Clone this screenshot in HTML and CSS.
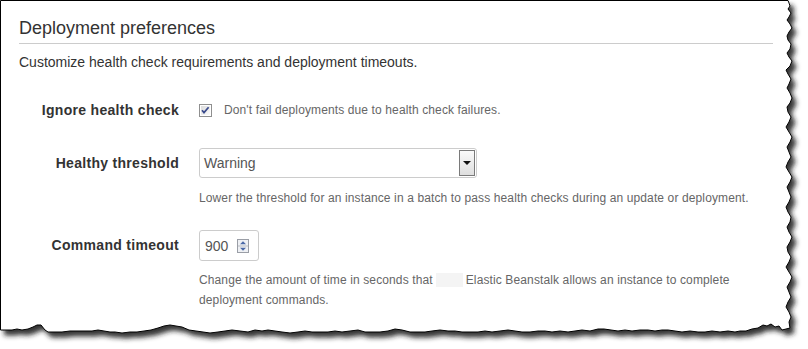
FILE: index.html
```html
<!DOCTYPE html>
<html lang="en">
<head>
  <meta charset="UTF-8">
  <title>Deployment preferences</title>
  <link rel="stylesheet" href="styles.css">
</head>
<body>
  <div class="page">
    <!-- torn paper frame behind the panel -->
    <svg class="torn" width="808" height="349" viewBox="0 0 808 349">
      <defs>
        <filter id="shadow" x="-5%" y="-5%" width="115%" height="120%">
          <feDropShadow dx="4" dy="5" stdDeviation="2.5" flood-color="#1a1a1a" flood-opacity="0.9"/>
        </filter>
      </defs>
      <path filter="url(#shadow)" fill="#fff" stroke="#000" stroke-width="1"
        d="M0.5 0.5 L788 0.5 L789 3 L790 6 L788 9 L791 13 L789 17 L787 20 L790 24 L792 28 L789 32 L787 36 L788 40 L791 44 L790 49 L787 53 L789 57 L792 61 L790 66 L786 70 L788 74 L791 79 L789 84 L787 88 L790 93 L792 98 L790 103 L787 107 L788 112 L791 117 L789 122 L786 127 L789 132 L792 137 L790 142 L787 147 L789 152 L791 157 L788 162 L786 167 L789 172 L792 177 L790 182 L787 187 L789 192 L791 197 L789 202 L786 207 L788 212 L791 217 L790 222 L787 227 L789 232 L792 237 L790 242 L787 247 L788 252 L791 257 L789 262 L786 267 L789 272 L792 277 L790 282 L787 287 L789 292 L791 297 L788 302 L786 307 L789 312 L791 317 L789 322 L790 328
        L786 329 L782 330 L779 326 L775 327 L771 324 L767 326 L763 325 L758 328 L752 329 L746 331 L740 331 L735 332 L728 331 L720 332 L712 331 L705 332 L698 332 L690 331 L682 332 L675 331 L668 330 L662 330 L655 331 L648 330 L640 330 L632 331 L625 330 L618 331 L611 330 L604 329 L598 329 L590 331 L582 330 L575 331 L568 332 L560 331 L552 332 L545 331 L538 331 L530 332 L522 332 L515 331 L508 330 L500 331 L492 332 L485 331 L478 332 L470 332 L462 332 L455 331 L448 331 L440 330 L432 331 L425 332 L418 332 L410 332 L402 330 L395 329 L388 331 L380 332 L372 332 L365 332 L358 330 L350 331 L342 332 L335 331 L328 332 L320 332 L312 332 L305 331 L298 332 L290 333 L282 332 L275 331 L268 330 L262 331 L255 330 L248 332 L240 331 L232 330 L225 331 L218 332 L210 333 L203 332 L196 331 L189 330 L182 327 L176 326 L170 325 L164 326 L158 328 L151 330 L144 331 L137 332 L130 332 L122 333 L115 332 L110 332 L104 331 L98 330 L92 331 L85 331 L78 331 L70 331 L62 332 L55 332 L48 332 L45 330 L41 325 L37 325 L33 327 L28 329 L22 330 L17 329 L12 330 L6 330 L0.5 330 Z"/>
    </svg>

    <div class="panel">
      <h2 class="panel-title">Deployment preferences</h2>
      <p class="panel-desc">Customize health check requirements and deployment timeouts.</p>

      <div class="field field-check">
        <label class="field-label">Ignore health check</label>
        <div class="field-body check-line">
          <span class="checkbox">
            <svg width="13" height="13" viewBox="0 0 13 13">
              <defs>
                <linearGradient id="cbg" x1="0" y1="0" x2="1" y2="1">
                  <stop offset="0" stop-color="#dcdcdc"/>
                  <stop offset="1" stop-color="#fbfbfb"/>
                </linearGradient>
              </defs>
              <rect x="0.5" y="0.5" width="12" height="12" fill="#fff" stroke="#8f8f8f"/>
              <rect x="2" y="2" width="9" height="9" fill="url(#cbg)"/>
              <path d="M3 6.2 L5 8.6 L9.6 3.2" fill="none" stroke="#3a4a8c" stroke-width="1.7"/>
            </svg>
          </span>
          <span class="check-text">Don't fail deployments due to health check failures.</span>
        </div>
      </div>

      <div class="field">
        <label class="field-label">Healthy threshold</label>
        <div class="field-body">
          <div class="select">
            <span class="select-value">Warning</span>
            <span class="select-btn"><span class="caret"></span></span>
          </div>
          <p class="help">Lower the threshold for an instance in a batch to pass health checks during an update or deployment.</p>
        </div>
      </div>

      <div class="field field-last">
        <label class="field-label">Command timeout</label>
        <div class="field-body">
          <div class="number">
            <span class="number-value">900</span>
            <svg class="spinner" width="12" height="14" viewBox="0 0 12 14">
              <rect x="0.5" y="0.5" width="11" height="13" fill="#eef0f4" stroke="#9a9ea6"/>
              <line x1="1" y1="7" x2="11" y2="7" stroke="#b9bcc2"/>
              <path d="M3 5.2 L6 2.2 L9 5.2 Z" fill="#4a68a6"/>
              <path d="M3 8.8 L6 11.8 L9 8.8 Z" fill="#4a68a6"/>
            </svg>
          </div>
          <p class="help">Change the amount of time in seconds that<span class="redact"></span>Elastic Beanstalk allows an instance to complete deployment commands.</p>
        </div>
      </div>
    </div>
  </div>
</body>
</html>
```

FILE: styles.css
```css
body {
  margin: 0;
  background: #fff;
  font-family: "Liberation Sans", Arial, sans-serif;
  color: #333;
}
.page {
  position: relative;
  width: 808px;
  height: 349px;
  overflow: hidden;
}
.torn {
  position: absolute;
  top: 0;
  left: 0;
}
.panel {
  position: relative;
  padding: 17px 35px 0 19px;
}
.panel-title {
  margin: 0;
  padding-bottom: 4px;
  border-bottom: 1px solid #ccc;
  font-size: 18px;
  font-weight: normal;
  line-height: 22px;
  color: #333;
}
.panel-desc {
  margin: 9px 0 0;
  font-size: 14px;
  line-height: 18px;
}
.field {
  display: grid;
  grid-template-columns: 160px 1fr;
  column-gap: 20px;
  margin-top: 28px;
}
.field-check {
  margin-top: 29px;
}
.field-last {
  margin-top: 22px;
}
.field-label {
  text-align: right;
  font-size: 14px;
  font-weight: bold;
  line-height: 30px;
  letter-spacing: 0.3px;
  color: #333;
}
.field-check .field-label {
  line-height: 20px;
}
.check-line {
  display: flex;
  align-items: center;
  gap: 12px;
  height: 20px;
}
.checkbox {
  display: flex;
  width: 13px;
  height: 13px;
}
.check-text {
  font-size: 12px;
  letter-spacing: 0.12px;
  color: #666;
}
.select {
  display: flex;
  align-items: center;
  justify-content: space-between;
  width: 278px;
  height: 30px;
  box-sizing: border-box;
  border: 1px solid #ccc;
  border-radius: 3px;
  padding: 0 1px 0 4px;
  background: #fff;
}
.select-value {
  font-size: 14px;
  color: #555;
}
.select-btn {
  display: flex;
  align-items: center;
  justify-content: center;
  width: 16px;
  height: 26px;
  box-sizing: border-box;
  border: 1px solid #7a7a7a;
  background: linear-gradient(#fafafa, #dedede);
}
.caret {
  width: 0;
  height: 0;
  border-left: 4px solid transparent;
  border-right: 4px solid transparent;
  border-top: 4px solid #111;
}
.number {
  display: flex;
  align-items: center;
  gap: 9px;
  width: 60px;
  height: 31px;
  box-sizing: border-box;
  border: 1px solid #ccc;
  border-radius: 3px;
  padding-left: 5px;
}
.number-value {
  font-size: 14px;
  color: #555;
}
.help {
  margin: 10px 0 0;
  font-size: 12px;
  line-height: 20px;
  letter-spacing: 0.12px;
  color: #666;
}
.field-last .help {
  margin-top: 9px;
}
.redact {
  display: inline-block;
  width: 27px;
  height: 14px;
  margin: 0 3px 0 3px;
  vertical-align: -3px;
  background: #f4f4f4;
}
```
